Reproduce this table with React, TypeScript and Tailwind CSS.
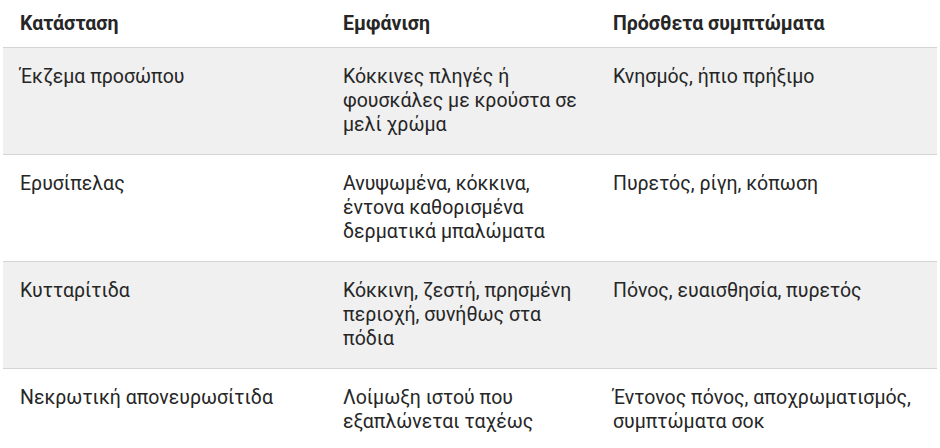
import React from 'react';

const rows = [
  { condition: 'Έκζεμα προσώπου', look: 'Κόκκινες πληγές ή φουσκάλες με κρούστα σε μελί χρώμα', extra: 'Κνησμός, ήπιο πρήξιμο' },
  { condition: 'Ερυσίπελας', look: 'Ανυψωμένα, κόκκινα, έντονα καθορισμένα δερματικά μπαλώματα', extra: 'Πυρετός, ρίγη, κόπωση' },
  { condition: 'Κυτταρίτιδα', look: 'Κόκκινη, ζεστή, πρησμένη περιοχή, συνήθως στα πόδια', extra: 'Πόνος, ευαισθησία, πυρετός' },
  { condition: 'Νεκρωτική απονευρωσίτιδα', look: 'Λοίμωξη ιστού που εξαπλώνεται ταχέως', extra: 'Έντονος πόνος, αποχρωματισμός, συμπτώματα σοκ' },
];

export default function App() {
  return (
    <div className="w-[940px] h-[448px] bg-white px-[3px] overflow-hidden" style={{ fontFamily: 'Roboto, "Noto Sans", sans-serif' }}>
      <table className="w-full table-fixed border-collapse text-[19.5px] leading-6 text-[#262626]">
        <colgroup>
          <col className="w-[340px]" />
          <col className="w-[270px]" />
          <col />
        </colgroup>
        <thead>
          <tr className="border-b border-[#d4d4d4]">
            <th className="text-left font-bold pl-[17px] pr-4 pt-3 pb-[11px]">Κατάσταση</th>
            <th className="text-left font-bold pr-6 pt-3 pb-[11px]">Εμφάνιση</th>
            <th className="text-left font-bold pr-4 pt-3 pb-[11px]">Πρόσθετα συμπτώματα</th>
          </tr>
        </thead>
        <tbody>
          {rows.map((r, i) => (
            <tr key={i} className={`border-b border-[#d4d4d4] ${i % 2 === 0 ? 'bg-[#f0f0f0]' : 'bg-white'}`}>
              <td className="align-top pl-[17px] pr-4 py-[17px]">{r.condition}</td>
              <td className="align-top pr-6 py-[17px]">{r.look}</td>
              <td className="align-top pr-4 py-[17px]">{r.extra}</td>
            </tr>
          ))}
        </tbody>
      </table>
    </div>
  );
}
